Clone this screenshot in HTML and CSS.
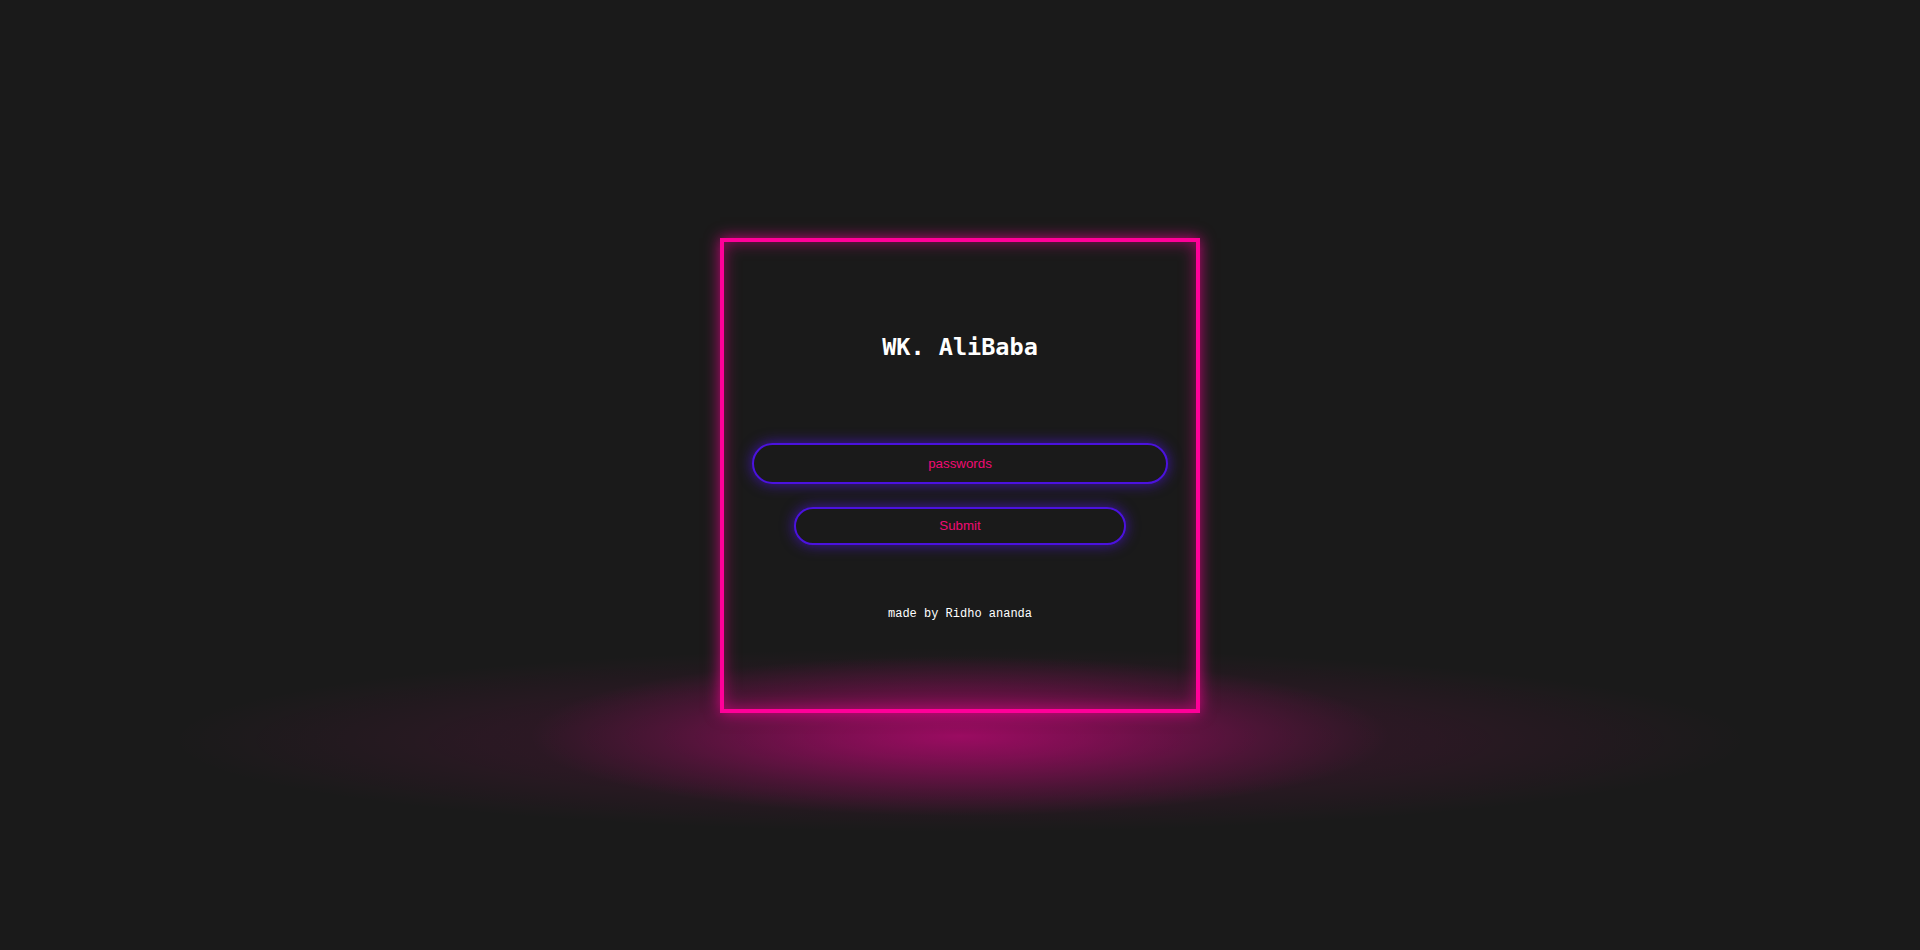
FILE: index.html
```html
<!DOCTYPE html>
<html>
<head>
<meta charset="utf-8">
<title>WK. AliBaba</title>
<link rel="stylesheet" href="styles.css">
</head>
<body>
<div class="floor-glow"></div>
<div class="box">
  <h2 class="title">WK. AliBaba</h2>
  <form class="form" onsubmit="return false">
    <input class="field" type="password" placeholder="passwords">
    <button class="submit" type="submit">Submit</button>
  </form>
  <p class="credit">made by Ridho ananda</p>
</div>
</body>
</html>
```

FILE: styles.css
```css
html, body {
  margin: 0;
  padding: 0;
}

body {
  height: 950px;
  background: #1a1a1a;
  display: flex;
  align-items: center;
  justify-content: center;
  overflow: hidden;
  position: relative;
}

.floor-glow {
  position: absolute;
  left: 160px;
  top: 640px;
  width: 1600px;
  height: 200px;
  background:
    radial-gradient(ellipse 430px 80px at 50% 48%, rgba(255, 0, 153, 0.5) 0%, rgba(255, 0, 153, 0.36) 30%, rgba(255, 0, 153, 0.14) 70%, rgba(255, 0, 153, 0) 100%),
    radial-gradient(ellipse 790px 92px at 50% 50%, rgba(255, 0, 153, 0.12) 0%, rgba(255, 0, 153, 0.07) 60%, rgba(255, 0, 153, 0) 100%);
  pointer-events: none;
}

.box {
  position: relative;
  width: 480px;
  height: 475px;
  box-sizing: border-box;
  border: 4px solid #ff0099;
  box-shadow: 0 0 14px rgba(255, 0, 153, 0.75), inset 0 0 16px rgba(255, 0, 153, 0.5);
  display: flex;
  flex-direction: column;
  align-items: center;
}

.title {
  margin: 91px 0 0;
  font-family: "DejaVu Sans Mono", monospace;
  font-weight: bold;
  font-size: 23.5px;
  line-height: 28px;
  color: #ffffff;
}

.form {
  display: flex;
  flex-direction: column;
  align-items: center;
  margin: 82px 0 0;
}

.field,
.submit {
  box-sizing: border-box;
  background: #1a1a1a;
  border: 2px solid #4b12df;
  border-radius: 22px;
  box-shadow: 0 0 14px rgba(80, 20, 230, 0.7);
  color: #f00a74;
  font-family: "Liberation Sans", Arial, sans-serif;
  font-size: 13.333px;
  text-align: center;
  outline: none;
}

.field {
  width: 416px;
  height: 41px;
}

.field::placeholder {
  color: #f00a74;
  opacity: 1;
}

.submit {
  margin-top: 23px;
  width: 332px;
  height: 38px;
}

.credit {
  margin: 62px 0 0;
  font-family: "Liberation Mono", "Courier New", monospace;
  font-size: 12px;
  line-height: 14px;
  color: #ffffff;
}
```
